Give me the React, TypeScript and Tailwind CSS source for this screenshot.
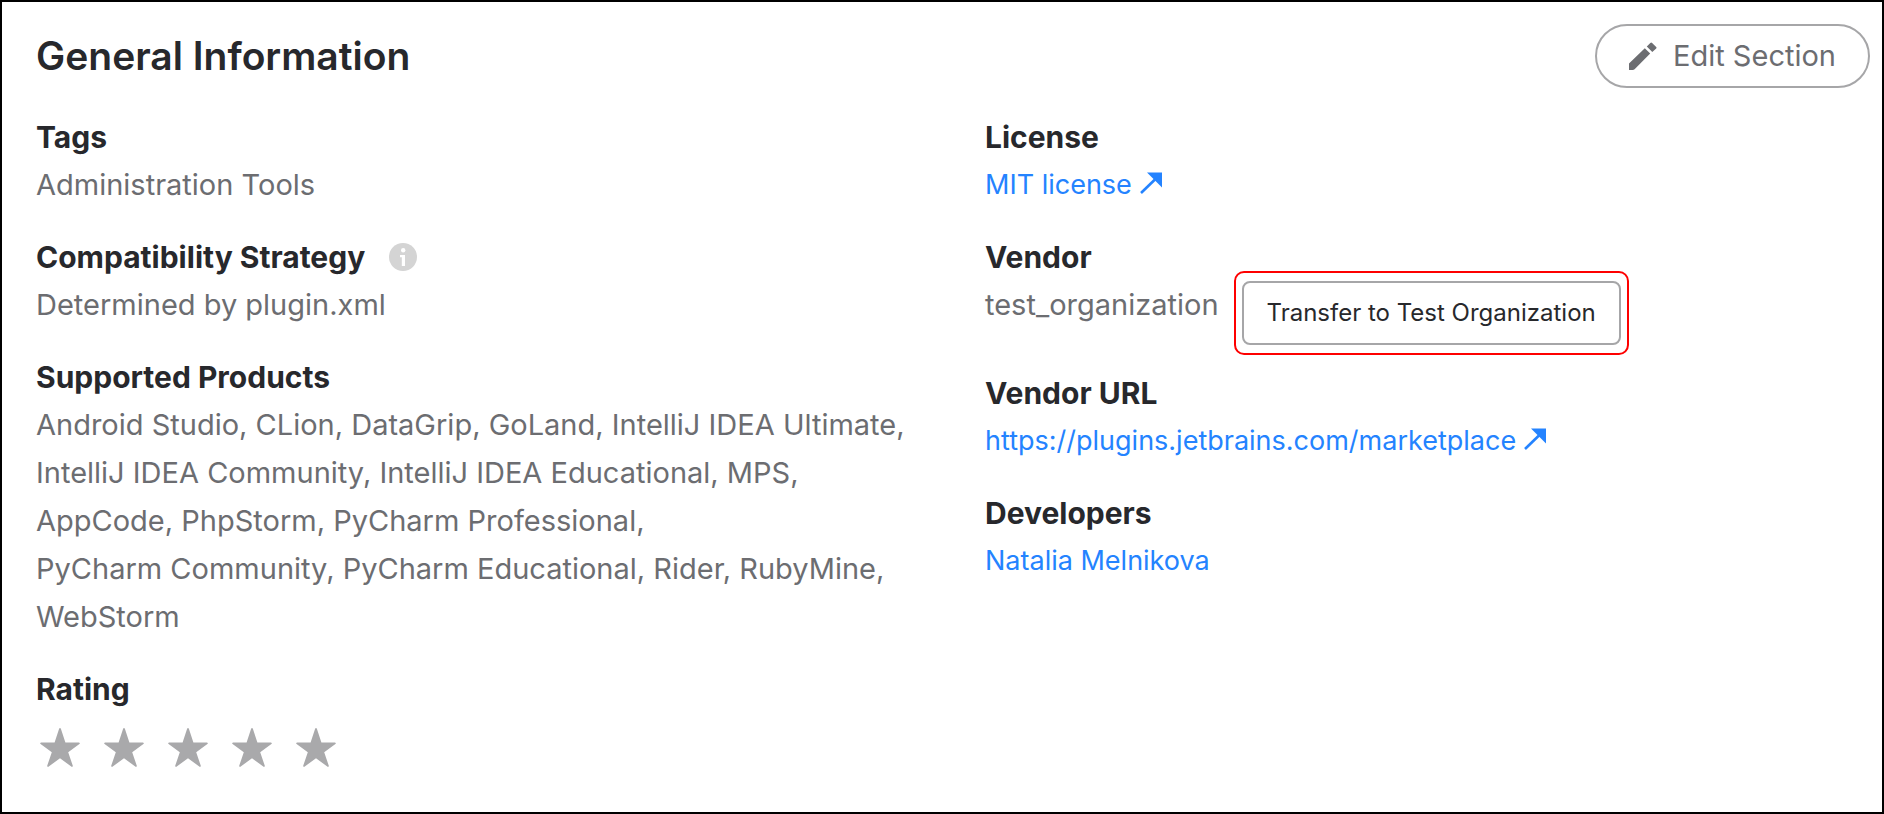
import type { ReactNode } from "react";

const products = [
  "Android\u00a0Studio",
  "CLion",
  "DataGrip",
  "GoLand",
  "IntelliJ\u00a0IDEA\u00a0Ultimate",
  "IntelliJ\u00a0IDEA\u00a0Community",
  "IntelliJ\u00a0IDEA\u00a0Educational",
  "MPS",
  "AppCode",
  "PhpStorm",
  "PyCharm\u00a0Professional",
  "PyCharm\u00a0Community",
  "PyCharm\u00a0Educational",
  "Rider",
  "RubyMine",
  "WebStorm",
];

function PencilIcon() {
  return (
    <svg width="28" height="28" viewBox="0 0 28 28" fill="currentColor" aria-hidden="true">
      <path d="M0 28V21.4L15.8 6.2L21.2 11.6L5.6 27.2Q4.8 28 3.6 28ZM17.8 4.4L21.3 0.9Q22.2 0 23.1 0.9L27.2 5Q28 5.8 27.2 6.6L23.3 10Z" />
    </svg>
  );
}

function ExternalArrow() {
  return (
    <svg className="ml-2 inline-block align-baseline" width="22" height="22" viewBox="0 0 22 22" aria-hidden="true">
      <path d="M7 0.5H22V15.5Z" fill="currentColor" />
      <path d="M1 21L16 6.5" stroke="currentColor" strokeWidth="2.6" fill="none" />
    </svg>
  );
}

function InfoIcon() {
  return (
    <svg width="28" height="28" viewBox="0 0 28 28" role="img" aria-label="Info">
      <circle cx="14" cy="14" r="14" fill="#d4d4d4" />
      <circle cx="14.2" cy="7.3" r="2.2" fill="#fff" />
      <path d="M11 12H16V23H12.8V14.2H11Z" fill="#fff" />
    </svg>
  );
}

function Star() {
  return (
    <svg width="40" height="40" viewBox="0 0 40 40" fill="#a9a9ab" aria-hidden="true">
      <path d="M19.2 0.6Q20 -0.4 20.8 0.6L25.4 14.4H39Q40.6 15 39.4 16L28.2 24.2L32.8 37.8Q32.8 39.2 31.6 38.8L20 30.2L8.4 38.8Q7.2 39.2 7.2 37.8L11.8 24.2L0.6 16Q-0.6 15 1 14.4H14.6Z" />
    </svg>
  );
}

function Field({ label, extra, children }: { label: string; extra?: ReactNode; children: ReactNode }) {
  return (
    <div>
      <dt className="flex items-center gap-6 text-[30px] leading-[48px] font-bold text-[#27282c]">
        {label}
        {extra}
      </dt>
      <dd className="text-[29px] leading-[48px] text-[#6c6d71]">{children}</dd>
    </div>
  );
}

function TextLink({ href, children }: { href: string; children: ReactNode }) {
  return (
    <a href={href} className="block text-[27px] leading-[48px] text-[#2483ff]">
      {children}
    </a>
  );
}

export default function App() {
  return (
    <main className="min-h-screen border-2 border-black bg-white pt-[22px] pr-3 pb-10 pl-[34px] font-['Inter',sans-serif]">
      <header className="flex items-center justify-between">
        <h1 className="text-[39px] leading-[48px] font-semibold text-[#27282c]">General Information</h1>
        <button
          type="button"
          className="flex h-16 items-center gap-4 rounded-full border-2 border-[#a6a6a8] px-8 text-[29px] text-[#6c6d71]"
        >
          <PencilIcon />
          Edit Section
        </button>
      </header>

      <div className="mt-[25px] grid grid-cols-2 items-start gap-16">
        <dl className="flex flex-col gap-6">
          <Field label="Tags">Administration Tools</Field>
          <Field label="Compatibility Strategy" extra={<InfoIcon />}>
            Determined by plugin.xml
          </Field>
          <Field label="Supported Products">{products.join(", ")}</Field>
          <Field label="Rating">
            <div className="flex gap-6 pt-[15px] pl-1" role="img" aria-label="No rating yet">
              {[1, 2, 3, 4, 5].map((n) => (
                <Star key={n} />
              ))}
            </div>
          </Field>
        </dl>

        <dl className="flex flex-col gap-6">
          <Field label="License">
            <TextLink href="#license">
              MIT license
              <ExternalArrow />
            </TextLink>
          </Field>
          <Field label="Vendor">
            <div className="flex items-start gap-[23px]">
              test_organization
              <div className="relative">
                <button
                  type="button"
                  className="block h-16 rounded-lg border-2 border-[#a6a6a8] px-[23px] text-[24px] text-[#27282c]"
                >
                  Transfer to Test Organization
                </button>
                <span className="pointer-events-none absolute -inset-x-2 -inset-y-2.5 rounded-[10px] border-2 border-[#fe0000]" />
              </div>
            </div>
          </Field>
          <Field label="Vendor URL">
            <TextLink href="https://plugins.jetbrains.com/marketplace">
              https://plugins.jetbrains.com/marketplace
              <ExternalArrow />
            </TextLink>
          </Field>
          <Field label="Developers">
            <TextLink href="#developer">Natalia Melnikova</TextLink>
          </Field>
        </dl>
      </div>
    </main>
  );
}
